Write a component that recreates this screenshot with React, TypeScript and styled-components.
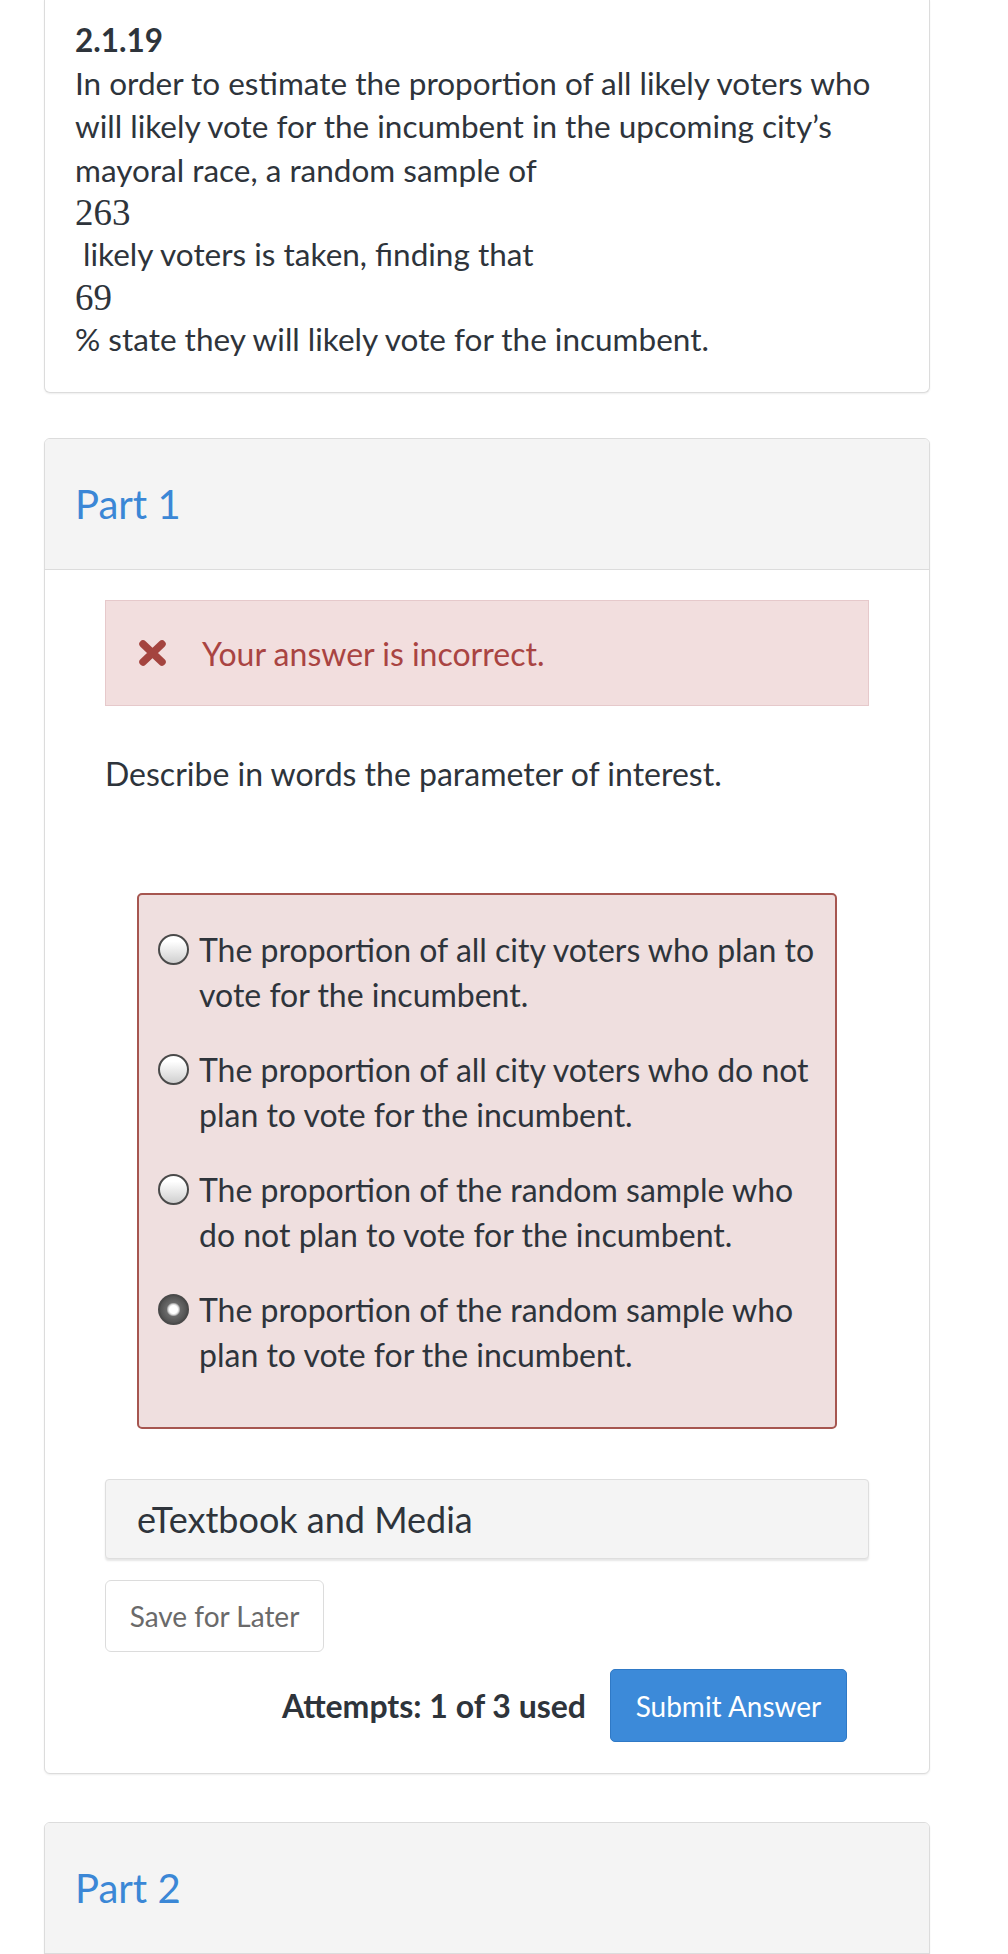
import styled, { createGlobalStyle } from "styled-components";

const GlobalStyle = createGlobalStyle`
  html, body {
    margin: 0;
    padding: 0;
    background: #ffffff;
  }
  body {
    font-family: "Lato", "Liberation Sans", sans-serif;
    color: #2e343b;
  }
`;

const Page = styled.main`
  width: 886px;
  padding: 0 0 40px 44px;
`;

const Card = styled.section<{ $cut?: boolean }>`
  background: #fff;
  border: 1px solid #dcdcdc;
  border-top: ${(p) => (p.$cut ? "none" : "1px solid #dcdcdc")};
  border-radius: ${(p) => (p.$cut ? "0 0 6px 6px" : "6px")};
  box-shadow: 0 1px 2px rgba(0, 0, 0, 0.07);
  overflow: hidden;
  margin-bottom: ${(p) => (p.$cut ? "45px" : "48px")};
`;

const QuestionBody = styled.div`
  padding: 18px 30px 31px;
  font-size: 31.5px;
  line-height: 43.3px;
`;

const QuestionId = styled.div`
  font-weight: 700;
  line-height: 44px;
`;

const Line = styled.div`
  white-space: pre;
`;

const Num = styled.div`
  font-family: "Liberation Serif", "Times New Roman", serif;
  font-size: 37px;
  line-height: 41.5px;
`;

const PartHeader = styled.header`
  height: 130px;
  display: flex;
  align-items: center;
  padding: 0 30px;
  background: #f4f4f4;
  border-bottom: 1px solid #dcdcdc;
`;

const PartTitle = styled.h2`
  margin: 0;
  font-size: 40px;
  font-weight: 400;
  color: #3b87d6;
`;

const PartBody = styled.div`
  padding: 30px 60px 31px 60px;
`;

const Alert = styled.div`
  height: 106px;
  box-sizing: border-box;
  display: flex;
  align-items: center;
  gap: 35px;
  padding: 0 32px;
  background: #f2dede;
  border: 1.5px solid #e6c9cb;
  color: #a94442;
  font-size: 32px;
`;

const Prompt = styled.p`
  margin: 46px 0 0;
  font-size: 32px;
  line-height: 43px;
`;

const ChoiceBox = styled.div`
  margin: 98px 32px 0;
  padding: 32px 18px 50px 19px;
  background: #efdfdf;
  border: 2px solid #a65650;
  border-radius: 5px;
  display: flex;
  flex-direction: column;
  gap: 30px;
`;

const Choice = styled.label`
  display: flex;
  align-items: flex-start;
  gap: 10px;
  font-size: 32px;
  line-height: 45px;
`;

const Radio = styled.span<{ $checked?: boolean }>`
  flex: none;
  width: 31px;
  height: 31px;
  margin-top: 7px;
  box-sizing: border-box;
  border-radius: 50%;
  border: 2px solid #4a4a4a;
  background: ${(p) =>
    p.$checked
      ? "radial-gradient(circle at 50% 50%, #ffffff 0 4px, #cfcfcf 5.5px, #6a6a6a 7px, #3c3c3c 100%)"
      : "linear-gradient(#ffffff 20%, #cfcfcf)"};
`;

const Media = styled.div`
  margin-top: 50px;
  height: 80px;
  box-sizing: border-box;
  display: flex;
  align-items: center;
  padding-left: 31px;
  background: #f4f4f4;
  border: 1px solid #dedede;
  border-radius: 4px;
  box-shadow: 0 2px 2px rgba(0, 0, 0, 0.1);
  font-size: 36px;
`;

const SaveButton = styled.button`
  display: block;
  margin-top: 21px;
  width: 219px;
  height: 72px;
  background: #fff;
  border: 1.5px solid #dcdcdc;
  border-radius: 6px;
  color: #6a6a6a;
  font-family: inherit;
  font-size: 28px;
`;

const ActionRow = styled.div`
  margin-top: 17px;
  display: flex;
  justify-content: flex-end;
  align-items: center;
  gap: 24px;
  padding-right: 22px;
`;

const Attempts = styled.span`
  font-weight: 700;
  font-size: 32px;
`;

const SubmitButton = styled.button`
  width: 237px;
  height: 73px;
  background: #3c8ad9;
  border: 1px solid #2f79c6;
  border-radius: 5px;
  color: #fff;
  font-family: inherit;
  font-size: 28px;
`;

const PartTwoBody = styled.div`
  height: 60px;
`;

const CrossIcon = () => (
  <svg width="29" height="26" viewBox="0 0 29 26">
    <path
      d="M5 4 L24 22 M24 4 L5 22"
      stroke="#a4443f"
      strokeWidth="7.5"
      strokeLinecap="round"
    />
  </svg>
);

const choices = [
  { text: "The proportion of all city voters who plan to vote for the incumbent.", checked: false },
  { text: "The proportion of all city voters who do not plan to vote for the incumbent.", checked: false },
  { text: "The proportion of the random sample who do not plan to vote for the incumbent.", checked: false },
  { text: "The proportion of the random sample who plan to vote for the incumbent.", checked: true },
];

export default function App() {
  return (
    <>
      <GlobalStyle />
      <Page>
        <Card $cut>
          <QuestionBody>
            <QuestionId>2.1.19</QuestionId>
            <Line>In order to estimate the proportion of all likely voters who</Line>
            <Line>will likely vote for the incumbent in the upcoming city’s</Line>
            <Line>mayoral race, a random sample of</Line>
            <Num>263</Num>
            <Line> likely voters is taken, finding that</Line>
            <Num>69</Num>
            <Line>% state they will likely vote for the incumbent.</Line>
          </QuestionBody>
        </Card>

        <Card>
          <PartHeader>
            <PartTitle>Part 1</PartTitle>
          </PartHeader>
          <PartBody>
            <Alert>
              <CrossIcon />
              <span>Your answer is incorrect.</span>
            </Alert>
            <Prompt>Describe in words the parameter of interest.</Prompt>
            <ChoiceBox>
              {choices.map((c) => (
                <Choice key={c.text}>
                  <Radio $checked={c.checked} />
                  <span>{c.text}</span>
                </Choice>
              ))}
            </ChoiceBox>
            <Media>eTextbook and Media</Media>
            <SaveButton>Save for Later</SaveButton>
            <ActionRow>
              <Attempts>Attempts: 1 of 3 used</Attempts>
              <SubmitButton>Submit Answer</SubmitButton>
            </ActionRow>
          </PartBody>
        </Card>

        <Card>
          <PartHeader>
            <PartTitle>Part 2</PartTitle>
          </PartHeader>
          <PartTwoBody />
        </Card>
      </Page>
    </>
  );
}
